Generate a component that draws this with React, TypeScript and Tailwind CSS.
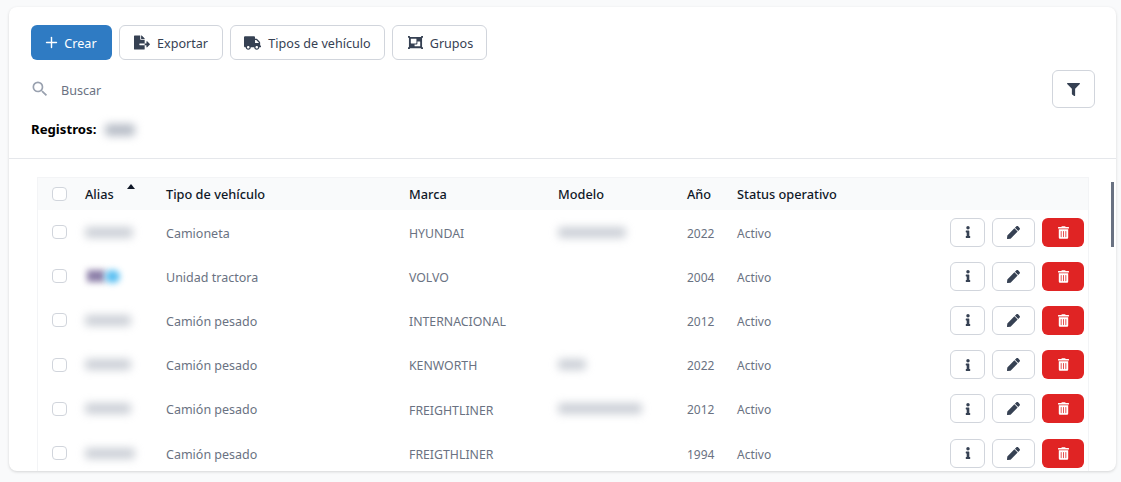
import React from 'react';
import { FaFileExport, FaFilter, FaInfo, FaObjectGroup, FaPen, FaTrashAlt, FaTruck } from 'react-icons/fa';
import { MdSearch } from 'react-icons/md';
import { Plus } from 'lucide-react';

const rows = [
  { alias: 'w-[48px]', tipo: 'Camioneta', marca: 'HYUNDAI', modelo: 'w-[68px]', anio: '2022' },
  { alias: 'special', tipo: 'Unidad tractora', marca: 'VOLVO', modelo: '', anio: '2004' },
  { alias: 'w-[46px]', tipo: 'Camión pesado', marca: 'INTERNACIONAL', modelo: '', anio: '2012' },
  { alias: 'w-[46px]', tipo: 'Camión pesado', marca: 'KENWORTH', modelo: 'w-[28px]', anio: '2022' },
  { alias: 'w-[46px]', tipo: 'Camión pesado', marca: 'FREIGHTLINER', modelo: 'w-[84px]', anio: '2012' },
  { alias: 'w-[50px]', tipo: 'Camión pesado', marca: 'FREIGTHLINER', modelo: '', anio: '1994' },
];

const Blur: React.FC<{ w: string }> = ({ w }) => (
  <div className={`${w} h-[11px] rounded-sm bg-gray-400/50 blur-[4px]`} />
);

const Checkbox: React.FC = () => (
  <span className="block w-[15px] h-[14px] rounded-[4px] border border-gray-300 bg-white" />
);

const ToolButton: React.FC<{ icon: React.ReactNode; label: string; w: string }> = ({ icon, label, w }) => (
  <button className={`${w} h-[35px] flex items-center justify-center gap-[7px] rounded-md border border-gray-300 bg-white text-[12.6px] text-gray-700`}>
    {icon}
    <span className="pt-[3px]">{label}</span>
  </button>
);

const App: React.FC = () => {
  return (
    <div className="h-[482px] overflow-hidden bg-[#f9fafb] pl-[9px] pr-[5px] pt-[7px] pb-[11px] font-['Noto_Sans',sans-serif]">
      <div className="relative h-full overflow-hidden rounded-lg bg-white shadow-[0_1px_3px_rgba(0,0,0,0.15)]">
        <div className="h-[152px] border-b border-gray-200 px-[22px] pt-[18px]">
          <div className="flex gap-[7px]">
            <button className="w-[81px] h-[35px] pr-[3px] flex items-center justify-center gap-[4px] rounded-md bg-[#2f7bc3] text-[12.6px] text-white">
              <Plus className="w-[17px] h-[17px]" strokeWidth={2} />
              <span className="pt-[3px]">Crear</span>
            </button>
            <ToolButton w="w-[104px]" label="Exportar" icon={<FaFileExport className="w-[16px] h-[15px] text-gray-700" />} />
            <ToolButton w="w-[155px]" label="Tipos de vehículo" icon={<FaTruck className="w-[17px] h-[14px] text-gray-700" />} />
            <ToolButton w="w-[95px] pl-[2px]" label="Grupos" icon={<FaObjectGroup className="w-[15px] h-[15px] text-gray-700" />} />
          </div>
          <div className="mt-[10px] flex items-center justify-between">
            <div className="ml-[-1px] flex items-center gap-[11px] text-[12.6px] text-gray-500">
              <MdSearch className="w-[20px] h-[20px] text-gray-400" />
              <span className="pt-[4px]">Buscar</span>
            </div>
            <button className="mr-[-1px] w-[43px] h-[38px] flex items-center justify-center rounded-md border border-gray-300 bg-white">
              <FaFilter className="w-[13px] h-[13px] text-gray-700" />
            </button>
          </div>
          <div className="mt-[12px] flex items-center gap-[9px] text-[13.2px] font-bold text-black">
            Registros:
            <div className="w-[30px] h-[12px] rounded-sm bg-gray-400/70 blur-[4px]" />
          </div>
        </div>

        <div className="mx-[28px] mr-[27px] mt-[18px] border-x border-t border-gray-100 text-[12.5px] text-gray-500">
          <div className="h-[32px] grid grid-cols-[47px_81px_243px_149px_129px_50px_1fr] items-center bg-gray-50 text-[12.75px] font-medium text-gray-900">
            <div className="pl-[14px]"><Checkbox /></div>
            <div className="relative pt-[1px]">
              Alias
              <span className="absolute left-[42px] top-[0px] w-0 h-0 border-x-[4px] border-b-[5px] border-x-transparent border-b-gray-900" />
            </div>
            <div className="pt-[1px]">Tipo de vehículo</div>
            <div className="pt-[1px]">Marca</div>
            <div className="pt-[1px]">Modelo</div>
            <div className="pt-[1px]">Año</div>
            <div className="pt-[1px]">Status operativo</div>
          </div>
          {rows.map((row, i) => (
            <div key={i} className="h-[44.2px] grid grid-cols-[47px_81px_243px_149px_129px_50px_1fr_auto] items-center pr-[4px]">
              <div className="pl-[14px]"><Checkbox /></div>
              {row.alias === 'special' ? (
                <div className="flex ml-[2px]">
                  <div className="w-[18px] h-[12px] bg-[#8c7fa8] blur-[3px]" />
                  <div className="w-[15px] h-[13px] rounded-full bg-[#5cc0f2] blur-[3px]" />
                </div>
              ) : (
                <Blur w={row.alias} />
              )}
              <div className="pt-[4px]">{row.tipo}</div>
              <div className="pt-[4px] text-[12.3px]">{row.marca}</div>
              <div>{row.modelo && <Blur w={row.modelo} />}</div>
              <div className="pt-[3px] text-[12px]">{row.anio}</div>
              <div className="pt-[3px] text-[12px]">Activo</div>
              <div className="flex gap-[7px]">
                <button className="w-[35px] h-[29px] flex items-center justify-center rounded-md border border-gray-300 bg-white">
                  <FaInfo className="w-[10px] h-[12px] text-gray-700" />
                </button>
                <button className="w-[43px] h-[29px] flex items-center justify-center rounded-md border border-gray-300 bg-white">
                  <FaPen className="w-[13px] h-[13px] text-gray-700" />
                </button>
                <button className="w-[42px] h-[29px] flex items-center justify-center rounded-md bg-[#e02424]">
                  <FaTrashAlt className="w-[11px] h-[13px] text-white" />
                </button>
              </div>
            </div>
          ))}
        </div>

        <div className="absolute right-[2px] top-[175px] w-[3px] h-[65px] bg-gray-500" />
      </div>
    </div>
  );
};

export default App;
